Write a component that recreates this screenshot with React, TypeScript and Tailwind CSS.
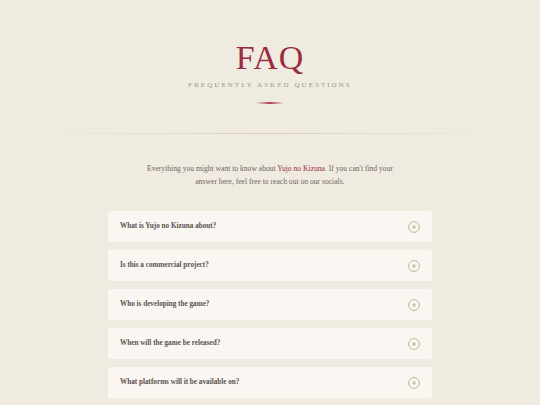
import React from 'react'

const questions = [
  'What is Yujo no Kizuna about?',
  'Is this a commercial project?',
  'Who is developing the game?',
  'When will the game be released?',
  'What platforms will it be available on?',
]

const PlusIcon = () => (
  <svg width="12" height="12" viewBox="0 0 12 12" fill="none" stroke="#b0a87c" strokeWidth="0.8">
    <circle cx="6" cy="6" r="5.4" />
    <path d="M6 3.9v4.2M3.9 6h4.2" />
  </svg>
)

const App: React.FC = () => {
  return (
    <div
      className="min-h-[405px] bg-[#f0ebe1] flex flex-col items-center"
      style={{ fontFamily: '"Liberation Serif", "DejaVu Serif", serif' }}
    >
      <h1 className="mt-[38px] text-[34px] leading-[40px] text-[#9b2d3e] tracking-[1px]">FAQ</h1>
      <p className="mt-[2px] text-[7px] leading-[10px] tracking-[2.05px] text-[#9c9a6c] uppercase">
        Frequently Asked Questions
      </p>
      <div className="mt-[12px] w-[28px] h-[2px] rounded-full bg-gradient-to-r from-transparent via-[#b0404f] to-transparent" />
      <div className="mt-[29px] w-[460px] h-px bg-gradient-to-r from-transparent via-[#dccdc4] to-transparent" />

      <p className="mt-[29px] w-[260px] text-center text-[7.6px] leading-[12.5px] text-[#6f6460]">
        Everything you might want to know about <span className="text-[#9b2d3e]">Yujo no Kizuna</span>. If you can't find
        your answer here, feel free to reach out on our socials.
      </p>

      <div className="mt-[23px] w-[324px] flex flex-col gap-[8px]">
        {questions.map((q) => (
          <div key={q} className="h-[31px] rounded-[3px] bg-[#faf6f2] flex items-center justify-between px-[12px]">
            <span className="text-[7.2px] font-bold text-[#5c5250]">{q}</span>
            <PlusIcon />
          </div>
        ))}
      </div>
    </div>
  )
}

export default App
